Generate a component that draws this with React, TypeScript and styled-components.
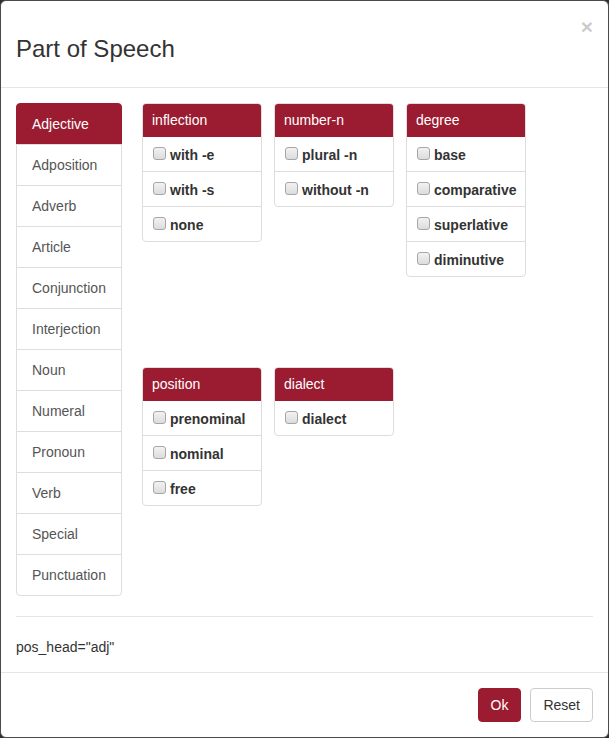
import styled, { createGlobalStyle } from "styled-components";
import { useState } from "react";

const GlobalStyle = createGlobalStyle`
    html, body {
        margin: 0;
        padding: 0;
        background: #2e2e2e;
    }
    body {
        font-family: "Liberation Sans", Arial, Helvetica, sans-serif;
        font-size: 14px;
        line-height: 20px;
        color: #333;
    }
    * { box-sizing: border-box; }
`;

const crimson = "#9b1c30";

const Modal = styled.div`
    width: 609px;
    height: 738px;
    background: #fff;
    border: 1px solid #4a4a4a;
    border-radius: 6px;
    display: flex;
    flex-direction: column;
    overflow: hidden;
`;
const Header = styled.div`
    display: flex;
    justify-content: space-between;
    align-items: flex-start;
    padding: 15px;
    border-bottom: 1px solid #e5e5e5;
`;
const Title = styled.h4`
    margin: 20px 0 10px;
    font-size: 24px;
    line-height: 26px;
    font-weight: 400;
    color: #333;
`;
const Close = styled.button`
    border: 0;
    background: none;
    padding: 0;
    margin: 0;
    font-family: "Liberation Sans", Arial, sans-serif;
    font-size: 21px;
    font-weight: 700;
    line-height: 1;
    color: #000;
    opacity: 0.2;
    cursor: pointer;
`;
const Body = styled.div`
    padding: 15px;
    flex: 1;
`;
const Layout = styled.div`
    display: grid;
    grid-template-columns: 106px 1fr;
    column-gap: 20px;
    align-items: start;
`;
const ListGroup = styled.div`
    display: flex;
    flex-direction: column;
`;
const ListItem = styled.a<{ $active?: boolean }>`
    display: block;
    padding: 10px 15px;
    margin-bottom: -1px;
    border: 1px solid ${(p) => (p.$active ? crimson : "#ddd")};
    background: ${(p) => (p.$active ? crimson : "#fff")};
    color: ${(p) => (p.$active ? "#fff" : "#555")};
    text-decoration: none;
    cursor: pointer;
    &:first-child {
        border-top-left-radius: 4px;
        border-top-right-radius: 4px;
    }
    &:last-child {
        margin-bottom: 0;
        border-bottom-left-radius: 4px;
        border-bottom-right-radius: 4px;
    }
`;
const Panels = styled.div`
    display: grid;
    grid-template-columns: repeat(3, 120px);
    grid-template-rows: 252px auto;
    gap: 12px;
    align-items: start;
`;
const Panel = styled.div`
    border: 1px solid #ddd;
    border-radius: 4px;
    background: #fff;
    overflow: hidden;
`;
const PanelHeading = styled.div`
    background: ${crimson};
    color: #fff;
    padding: 7px 10px;
    margin: -1px -1px 0;
`;
const Row = styled.label`
    display: flex;
    align-items: flex-start;
    gap: 4px;
    padding: 8px 10px 6px;
    font-weight: 700;
    color: #333;
    cursor: pointer;
    & + & {
        border-top: 1px solid #ddd;
    }
`;
const Check = styled.input`
    appearance: none;
    width: 13px;
    height: 13px;
    margin: 2px 0 0;
    border: 1px solid #a6a6a6;
    border-radius: 3px;
    background: linear-gradient(#f2f2f2, #dcdcdc);
    flex: none;
    &:checked {
        background: linear-gradient(#fff, #e0e0e0);
        box-shadow: inset 0 0 0 3px #fff, inset 0 0 0 10px #333;
    }
`;
const Divider = styled.hr`
    margin: 20px 0;
    border: 0;
    border-top: 1px solid #e5e5e5;
`;
const Query = styled.div`
    color: #333;
`;
const Footer = styled.div`
    display: flex;
    justify-content: flex-end;
    gap: 9px;
    padding: 15px;
    border-top: 1px solid #e5e5e5;
`;
const Btn = styled.button<{ $primary?: boolean }>`
    font-family: "Liberation Sans", Arial, sans-serif;
    font-size: 14px;
    line-height: 20px;
    padding: 6px 12px;
    border-radius: 4px;
    border: 1px solid ${(p) => (p.$primary ? crimson : "#ccc")};
    background: ${(p) => (p.$primary ? crimson : "#fff")};
    color: ${(p) => (p.$primary ? "#fff" : "#333")};
    cursor: pointer;
`;

const parts = [
    "Adjective", "Adposition", "Adverb", "Article", "Conjunction", "Interjection",
    "Noun", "Numeral", "Pronoun", "Verb", "Special", "Punctuation",
];

const groups: { title: string; options: string[] }[] = [
    { title: "inflection", options: ["with -e", "with -s", "none"] },
    { title: "number-n", options: ["plural -n", "without -n"] },
    { title: "degree", options: ["base", "comparative", "superlative", "diminutive"] },
    { title: "position", options: ["prenominal", "nominal", "free"] },
    { title: "dialect", options: ["dialect"] },
];

export default function App() {
    const [active, setActive] = useState("Adjective");
    const [checked, setChecked] = useState<Record<string, boolean>>({});

    const toggle = (key: string) => setChecked((prev) => ({ ...prev, [key]: !prev[key] }));

    return <>
        <GlobalStyle />
        <Modal>
            <Header>
                <Title>Part of Speech</Title>
                <Close aria-label="Close">×</Close>
            </Header>
            <Body>
                <Layout>
                    <ListGroup>
                        {parts.map((p) => (
                            <ListItem key={p} $active={p === active} onClick={() => setActive(p)}>{p}</ListItem>
                        ))}
                    </ListGroup>
                    <Panels>
                        {groups.map((g) => (
                            <Panel key={g.title}>
                                <PanelHeading>{g.title}</PanelHeading>
                                {g.options.map((o) => {
                                    const key = g.title + ":" + o;
                                    return <Row key={o}>
                                        <Check type="checkbox" checked={!!checked[key]} onChange={() => toggle(key)} />
                                        {o}
                                    </Row>
                                })}
                            </Panel>
                        ))}
                    </Panels>
                </Layout>
                <Divider />
                <Query>pos_head="adj"</Query>
            </Body>
            <Footer>
                <Btn $primary>Ok</Btn>
                <Btn>Reset</Btn>
            </Footer>
        </Modal>
    </>
}
